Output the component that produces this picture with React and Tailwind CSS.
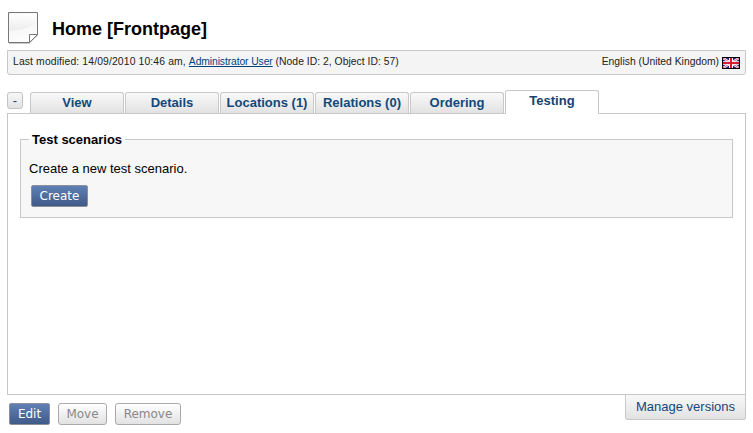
const tabs = ['View', 'Details', 'Locations (1)', 'Relations (0)', 'Ordering'];

function PageIcon() {
  return (
    <svg width="31" height="33" viewBox="0 0 31 33" className="block shrink-0">
      <defs>
        <linearGradient id="page" x1="0" y1="0" x2="0.3" y2="1">
          <stop offset="0" stopColor="#eeeeee" />
          <stop offset="1" stopColor="#fdfdfd" />
        </linearGradient>
        <linearGradient id="gloss" x1="0" y1="0" x2="0" y2="1">
          <stop offset="0" stopColor="#ffffff" />
          <stop offset="1" stopColor="#ececec" />
        </linearGradient>
      </defs>
      <path d="M1 31.5H21L30 23" fill="none" stroke="#c8c8c8" />
      <path d="M0.5 0.5H29.5V22.5L21.5 30.5H0.5Z" fill="url(#page)" stroke="#777777" />
      <path d="M1.5 1.5H28.5V8C26 15 14 18.5 1.5 18.5Z" fill="url(#gloss)" />
      <path d="M21.5 30.5V22.5H29.5Z" fill="#ffffff" stroke="#777777" />
    </svg>
  );
}

function Flag() {
  return (
    <svg width="18" height="12" viewBox="0 0 18 12" className="block shrink-0">
      <rect width="18" height="12" fill="#000" />
      <rect x="1" y="1" width="16" height="10" fill="#20207c" />
      <path d="M1 1L17 11M17 1L1 11" stroke="#fff" strokeWidth="2.2" />
      <path d="M1 1L17 11M17 1L1 11" stroke="#d83048" strokeWidth="0.8" />
      <path d="M7 1H11V11H7ZM1 4.3H17V7.7H1Z" fill="#fff" />
      <path d="M8 1H10V11H8ZM1 5H17V7H1Z" fill="#d81c34" />
      <path d="M0.5 0.5H17.5V11.5H0.5Z" fill="none" stroke="#000" />
    </svg>
  );
}

export default function App() {
  return (
    <div className="h-[433px] w-[753px] overflow-hidden bg-white pl-[7px] pr-[7px] pt-3 font-['Liberation_Sans',Arial,sans-serif] text-[13px] text-black">
      <header className="flex h-[38px] items-start pl-px">
        <PageIcon />
        <h1 className="ml-[13px] mt-[6px] whitespace-nowrap text-[18px] font-bold leading-[22px]">Home [Frontpage]</h1>
      </header>
      <div className="flex h-[25px] items-start justify-between whitespace-nowrap rounded-b-[3px] border border-[#c8c8c8] bg-[#f4f4f4] pl-[5px] pr-[5px] pt-[5px] text-[10.35px] leading-3 text-[#222]">
        <p>
          <span className="tracking-[0.14px]">Last modified: 14/09/2010 10:46 am, </span>
          <a className="tracking-[-0.1px] text-[#00447c] underline">Administrator User</a>
          <span className="tracking-[0.03px]"> (Node ID: 2, Object ID: 57)</span>
        </p>
        <div className="flex items-start gap-[3px]">
          <span>English (United Kingdom)</span>
          <div className="pt-px"><Flag /></div>
        </div>
      </div>
      <nav className="mt-[15px] flex h-[23px] items-start gap-px">
        <button className="mr-[6px] mt-[2px] flex h-[17px] w-4 items-center justify-center rounded-[3px] border border-[#c4c4c4] bg-linear-to-b from-[#f8f8f8] to-[#e2e2e2] pt-px text-[13px] text-[#13446e]">-</button>
        {tabs.map((label) => (
          <a key={label} className="mt-[2px] flex h-[21px] w-[94px] items-center justify-center whitespace-nowrap rounded-t-[3px] border border-b-0 border-[#c8c8c8] bg-linear-to-b from-[#f9f9f9] to-[#e2e2e2] text-[13px] font-bold text-[#13487a]">
            {label}
          </a>
        ))}
        <a className="relative z-10 flex h-6 w-[94px] items-center justify-center rounded-t-[3px] border border-b-0 border-[#c8c8c8] bg-white pb-[3px] text-[13px] font-bold text-[#13446e]">Testing</a>
      </nav>
      <main className="h-[282px] border border-[#c8c8c8] px-3 pt-[18px]">
        <fieldset className="h-[86px] border border-[#c8c8c8] bg-[#f7f7f7] px-2">
          <legend className="px-[3px] text-[13px] font-bold leading-[15px]">Test scenarios</legend>
          <p className="mt-[14px] leading-4">Create a new test scenario.</p>
          <button className="ml-[2px] mt-2 flex h-[22px] w-[57px] items-center justify-center rounded-[2px] border border-[#8a8f99] bg-linear-to-b from-[#5f80b5] to-[#405a88] pb-px font-['DejaVu_Sans',sans-serif] text-[12px] text-white">Create</button>
        </fieldset>
      </main>
      <footer className="flex items-start justify-between">
        <div className="flex gap-2 pl-[2px] pt-2 font-['DejaVu_Sans',sans-serif] text-[12px]">
          <button className="h-[22px] w-[41px] rounded-[2px] border border-[#8a8f99] bg-linear-to-b from-[#5f80b5] to-[#405a88] leading-[18px] text-white">Edit</button>
          <button className="h-[22px] w-[49px] rounded-[3px] border border-[#aaa] bg-linear-to-b from-white to-[#e2e2e2] leading-[18px] text-[#888]">Move</button>
          <button className="h-[22px] w-[66px] rounded-[3px] border border-[#aaa] bg-linear-to-b from-white to-[#e2e2e2] leading-[18px] text-[#888]">Remove</button>
        </div>
        <a className="flex h-[25px] w-[121px] items-center justify-center whitespace-nowrap rounded-b-[3px] border border-t-0 border-[#c8c8c8] bg-linear-to-b from-[#f8f8f8] to-[#e2e2e2] text-[13px] text-[#13487a]">Manage versions</a>
      </footer>
    </div>
  );
}
